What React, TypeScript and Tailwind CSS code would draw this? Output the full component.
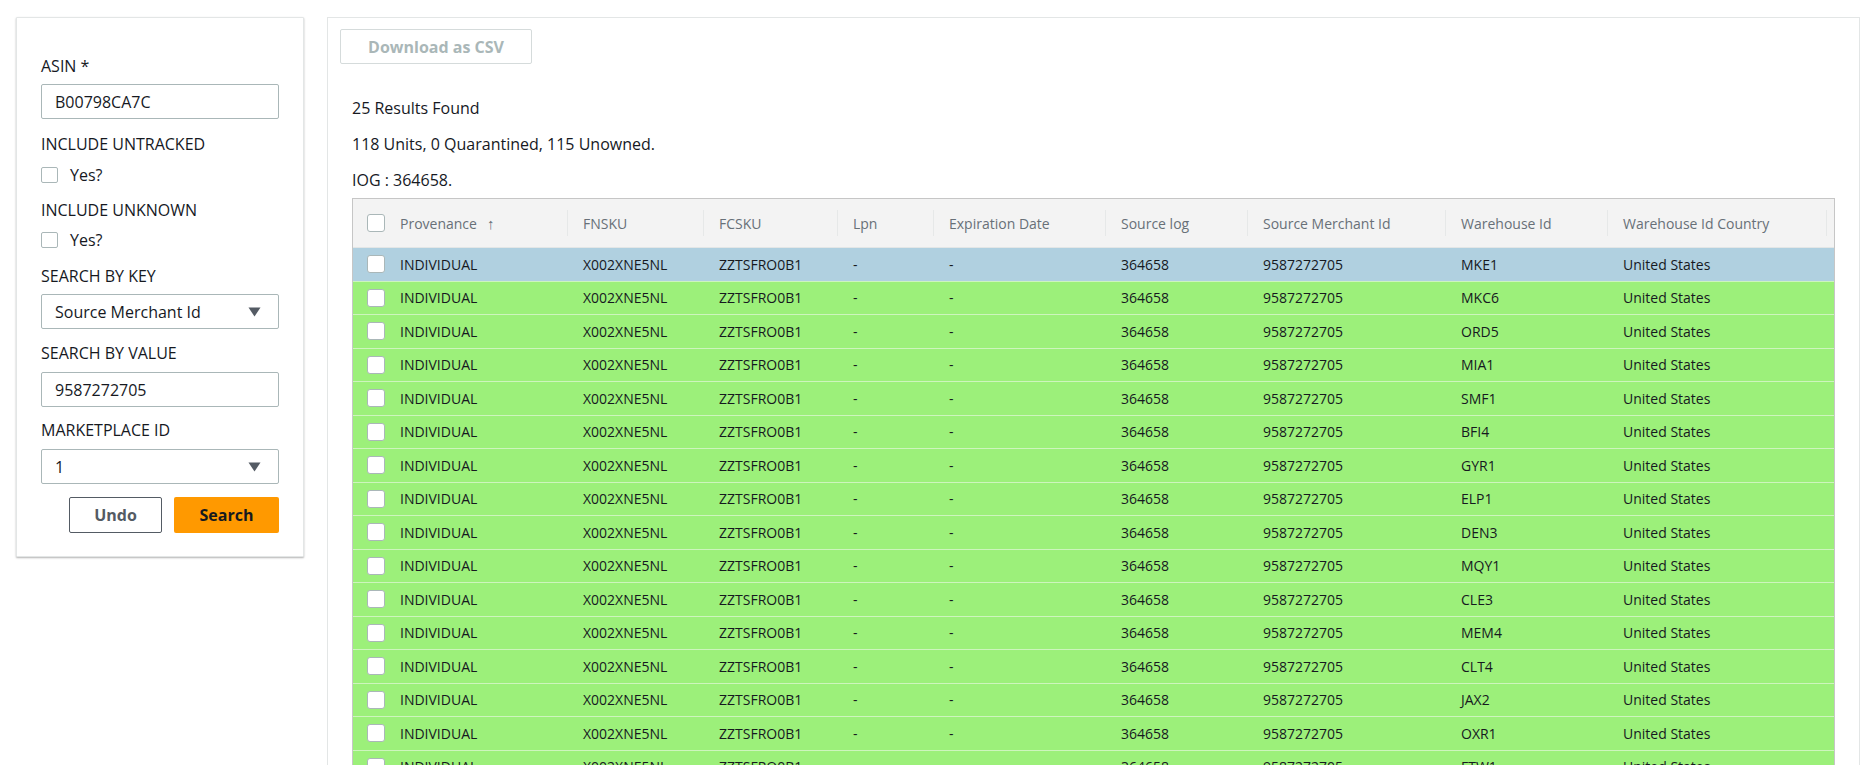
import React from "react";

type Row = {
    provenance: string;
    fnsku: string;
    fcsku: string;
    lpn: string;
    expiration: string;
    sourceLog: string;
    merchantId: string;
    warehouseId: string;
    country: string;
};

const warehouses = [
    "MKE1", "MKC6", "ORD5", "MIA1", "SMF1", "BFI4", "GYR1", "ELP1",
    "DEN3", "MQY1", "CLE3", "MEM4", "CLT4", "JAX2", "OXR1", "FTW1",
];

const rows: Row[] = warehouses.map((wh) => ({
    provenance: "INDIVIDUAL",
    fnsku: "X002XNE5NL",
    fcsku: "ZZTSFRO0B1",
    lpn: "-",
    expiration: "-",
    sourceLog: "364658",
    merchantId: "9587272705",
    warehouseId: wh,
    country: "United States",
}));

const columns = [
    { key: "fnsku", label: "FNSKU", width: "w-[136px]" },
    { key: "fcsku", label: "FCSKU", width: "w-[134px]" },
    { key: "lpn", label: "Lpn", width: "w-[96px]" },
    { key: "expiration", label: "Expiration Date", width: "w-[172px]" },
    { key: "sourceLog", label: "Source log", width: "w-[142px]" },
    { key: "merchantId", label: "Source Merchant Id", width: "w-[198px]" },
    { key: "warehouseId", label: "Warehouse Id", width: "w-[162px]" },
    { key: "country", label: "Warehouse Id Country", width: "w-[219px]" },
] as const;

const Checkbox = () => (
    <span className="w-[18px] h-[18px] shrink-0 rounded-[3px] border border-[#aab7b8] bg-white" />
);

const Label = ({ children, className = "" }: { children: React.ReactNode; className?: string }) => (
    <div className={`text-[16px] leading-[22px] text-[#16191f] ${className}`}>{children}</div>
);

const TextBox = ({ value, className = "" }: { value: string; className?: string }) => (
    <div className={`h-[35px] flex items-center px-[13px] border border-[#aab7b8] rounded-[2px] text-[16px] text-[#16191f] bg-white ${className}`}>
        {value}
    </div>
);

const SelectBox = ({ value, className = "" }: { value: string; className?: string }) => (
    <div className={`h-[35px] flex items-center justify-between pl-[13px] pr-[17px] border border-[#aab7b8] rounded-[2px] text-[16px] text-[#16191f] bg-white ${className}`}>
        <span>{value}</span>
        <svg width="13" height="10" viewBox="0 0 13 10">
            <path d="M0.5 0.5 L12.5 0.5 L6.5 9.5 Z" fill="#545b64" />
        </svg>
    </div>
);

const YesCheck = ({ className = "" }: { className?: string }) => (
    <div className={`flex items-center gap-[12px] h-[22px] ${className}`}>
        <span className="w-[17px] h-[16px] border border-[#aab7b8] rounded-[2px] bg-white" />
        <span className="text-[16px] text-[#16191f]">Yes?</span>
    </div>
);

const SearchForm: React.FC = () => (
    <div className="w-[288px] shrink-0 self-start bg-white border border-[#e3e6e6] shadow-[0_1px_2px_rgba(0,0,0,0.3)] rounded-[1px] px-[24px] pt-[37px] pb-[23px]">
        <Label>ASIN *</Label>
        <TextBox value="B00798CA7C" className="mt-[7px]" />
        <Label className="mt-[14px]">INCLUDE UNTRACKED</Label>
        <YesCheck className="mt-[9px]" />
        <Label className="mt-[13px]">INCLUDE UNKNOWN</Label>
        <YesCheck className="mt-[8px]" />
        <Label className="mt-[14px]">SEARCH BY KEY</Label>
        <SelectBox value="Source Merchant Id" className="mt-[7px]" />
        <Label className="mt-[13px]">SEARCH BY VALUE</Label>
        <TextBox value="9587272705" className="mt-[8px]" />
        <Label className="mt-[12px]">MARKETPLACE ID</Label>
        <SelectBox value="1" className="mt-[8px]" />
        <div className="mt-[13px] flex justify-end gap-[12px]">
            <button className="w-[93px] h-[36px] border border-[#545b64] rounded-[2px] bg-white text-[16px] font-bold text-[#545b64]">
                Undo
            </button>
            <button className="w-[105px] h-[36px] rounded-[2px] bg-[#ff9900] text-[16px] font-bold text-[#16191f]">
                Search
            </button>
        </div>
    </div>
);

const ResultsTable: React.FC = () => (
    <div className="mt-[7px] border-t border-l border-r border-[#c6c6c6] text-[14px]">
        <div className="flex h-[49px] bg-[#f3f3f3] text-[#687078] border-b border-[#e3e6e6]">
            <div className="w-[215px] shrink-0 flex items-center">
                <span className="ml-[14px] flex">
                    <Checkbox />
                </span>
                <span className="ml-[15px]">Provenance</span>
                <span className="ml-[10px] text-[15px] font-light">↑</span>
                <span className="ml-auto w-px h-[26px] bg-[#e6e8e8]" />
            </div>
            {columns.map((col) => (
                <div key={col.key} className={`${col.width} shrink-0 flex items-center`}>
                    <span className="ml-[15px]">{col.label}</span>
                    <span className="ml-auto w-px h-[26px] bg-[#e6e8e8]" />
                </div>
            ))}
            <div className="flex-1" />
        </div>
        {rows.map((row, i) => (
            <div
                key={i}
                className={`flex h-[33.5px] items-center border-b border-[#cdf5bd] text-[#16191f] ${
                    i === 0 ? "bg-[#b0d0e0]" : "bg-[#9cf07a]"
                }`}
            >
                <div className="w-[215px] shrink-0 flex items-center">
                    <span className="ml-[14px] flex">
                        <Checkbox />
                    </span>
                    <span className="ml-[15px]">{row.provenance}</span>
                </div>
                {columns.map((col) => (
                    <div key={col.key} className={`${col.width} shrink-0 pl-[15px]`}>
                        {row[col.key]}
                    </div>
                ))}
                <div className="flex-1" />
            </div>
        ))}
    </div>
);

export default function App() {
    return (
        <div className="w-full h-[765px] overflow-hidden bg-white flex gap-[23px] pl-[16px] pr-[3px] pt-[17px] font-['Open_Sans',_'Noto_Sans',_sans-serif]">
            <SearchForm />
            <div className="flex-1 min-w-0 border border-[#e3e6e6] bg-white px-[24px] pt-[11px] min-h-[800px]">
                <button className="-ml-[12px] w-[192px] h-[35px] border border-[#d5dbdb] rounded-[2px] bg-white text-[16px] font-bold text-[#aab7b8]">
                    Download as CSV
                </button>
                <div className="mt-[33px] text-[16px] leading-[22px] text-[#16191f]">25 Results Found</div>
                <div className="mt-[14px] text-[16px] leading-[22px] text-[#16191f]">118 Units, 0 Quarantined, 115 Unowned.</div>
                <div className="mt-[14px] text-[16px] leading-[22px] text-[#16191f]">IOG : 364658.</div>
                <ResultsTable />
            </div>
        </div>
    );
}
